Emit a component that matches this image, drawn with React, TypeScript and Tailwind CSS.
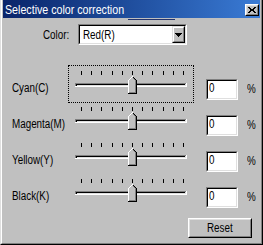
import React from "react";

const TICKS = [12, 22, 32, 43, 53, 63, 73, 83, 94, 104, 114];

function T({ children }: { children: React.ReactNode }) {
  return <span className="inline-block whitespace-nowrap origin-left scale-x-[0.82]">{children}</span>;
}

function Slider({ focused }: { focused?: boolean }) {
  return (
    <svg
      width={124}
      height={36}
      className={focused ? "block shrink-0 outline-1 outline-dotted outline-black" : "block shrink-0"}
      shapeRendering="crispEdges"
    >
      {TICKS.map((x) => (
        <rect key={x} x={x} y={5} width={1} height={4} fill="#000" />
      ))}
      {/* channel */}
      <rect x={6} y={17} width={111} height={1} fill="#808080" />
      <rect x={6} y={17} width={1} height={3} fill="#808080" />
      <rect x={7} y={18} width={109} height={1} fill="#000" />
      <rect x={7} y={18} width={1} height={2} fill="#000" />
      <rect x={8} y={19} width={109} height={1} fill="#dfdfdf" />
      <rect x={116} y={18} width={1} height={2} fill="#dfdfdf" />
      <rect x={6} y={20} width={112} height={1} fill="#fff" />
      <rect x={117} y={17} width={1} height={4} fill="#fff" />
      {/* thumb */}
      <path d="M59 14 L63 10 L68 14 L68 28 L59 28 Z" fill="#c0c0c0" />
      <rect x={59} y={14} width={1} height={13} fill="#fff" />
      <rect x={60} y={13} width={1} height={1} fill="#fff" />
      <rect x={61} y={12} width={1} height={1} fill="#fff" />
      <rect x={62} y={11} width={1} height={1} fill="#fff" />
      <rect x={63} y={10} width={1} height={1} fill="#fff" />
      <rect x={64} y={11} width={1} height={1} fill="#000" />
      <rect x={65} y={12} width={1} height={1} fill="#000" />
      <rect x={66} y={13} width={1} height={1} fill="#000" />
      <rect x={67} y={14} width={1} height={14} fill="#000" />
      <rect x={59} y={27} width={9} height={1} fill="#000" />
      <rect x={66} y={14} width={1} height={13} fill="#808080" />
      <rect x={60} y={26} width={7} height={1} fill="#808080" />
      <rect x={64} y={12} width={1} height={1} fill="#808080" />
      <rect x={65} y={13} width={1} height={1} fill="#808080" />
    </svg>
  );
}

function Row({ label, focused }: { label: string; focused?: boolean }) {
  return (
    <div className="h-[36px] flex items-start">
      <div className="w-[66px] shrink-0 pl-[9px] pt-[16px] text-[12px] leading-[12px]">
        <T>{label}</T>
      </div>
      <Slider focused={focused} />
      <div className="ml-[13px] mt-[13px] shrink-0 w-[32px] h-[21px] border border-t-[#808080] border-l-[#808080] border-b-white border-r-white">
        <div className="h-full border border-t-black border-l-black border-b-[#dfdfdf] border-r-[#dfdfdf] bg-white pl-[1px] pt-[1px] text-[12px] leading-[12px]">
          <T>0</T>
        </div>
      </div>
      <span className="ml-[9px] pt-[17px] text-[12px] leading-[12px]">
        <T>%</T>
      </span>
    </div>
  );
}

export default function App() {
  return (
    <div className="w-[263px] h-[245px] bg-[#c0c0c0] text-black border-l border-r border-b border-l-[#dfdfdf] border-r-black border-b-black font-['Liberation_Sans',Arial,sans-serif]">
      <div className="h-full border-l border-r border-b border-l-white border-r-[#808080] border-b-[#808080] px-[1px] flex flex-col">
        {/* title bar */}
        <div className="h-[18px] shrink-0 flex items-start justify-between bg-linear-to-r from-[#0a246a] to-[#3a7bd5] pl-[2px] pr-[1px]">
          <span className="text-white text-[13px] leading-[18px] mt-[1px]">
            <T>Selective color correction</T>
          </span>
          <div className="mt-[4px] w-[14px] h-[12px] bg-[#c0c0c0] border border-t-white border-l-white border-b-black border-r-black">
            <div className="h-full border border-t-[#dfdfdf] border-l-[#dfdfdf] border-b-[#808080] border-r-[#808080] flex items-center justify-center">
              <svg width={8} height={6} shapeRendering="crispEdges">
                <path
                  d="M0 0h2v1h-2zM6 0h2v1h-2zM1 1h2v1h-2zM5 1h2v1h-2zM2 2h4v1h-4zM2 3h4v1h-4zM1 4h2v1h-2zM5 4h2v1h-2zM0 5h2v1h-2zM6 5h2v1h-2z"
                  fill="#000"
                />
              </svg>
            </div>
          </div>
        </div>
        {/* stray underline */}
        <div className="h-[3px] shrink-0 pt-[1px] pl-[125px]">
          <div className="w-[47px] h-[1px] bg-[#24346c]" />
        </div>
        {/* color row */}
        <div className="mt-[3px] h-[21px] shrink-0 flex items-center">
          <span className="w-[75px] shrink-0 pl-[40px] text-[12px] leading-[12px]">
            <T>Color:</T>
          </span>
          <div className="w-[109px] h-[21px] shrink-0 border border-t-[#808080] border-l-[#808080] border-b-white border-r-white">
            <div className="h-full border border-t-black border-l-black border-b-[#dfdfdf] border-r-[#dfdfdf] bg-white flex items-center">
              <span className="flex-1 pl-[3px] text-[12px] leading-[12px]">
                <T>Red(R)</T>
              </span>
              <div className="w-[13px] h-full bg-[#c0c0c0] border border-t-[#dfdfdf] border-l-[#dfdfdf] border-b-black border-r-black">
                <div className="h-full border border-t-white border-l-white border-b-[#808080] border-r-[#808080] flex items-center justify-center">
                  <svg width={7} height={4} shapeRendering="crispEdges">
                    <path d="M0 0h7v1h-7zM1 1h5v1h-5zM2 2h3v1h-3zM3 3h1v1h-1z" fill="#000" />
                  </svg>
                </div>
              </div>
            </div>
          </div>
        </div>
        {/* sliders */}
        <div className="mt-[21px] flex flex-col">
          <Row label="Cyan(C)" focused />
          <Row label="Magenta(M)" />
          <Row label="Yellow(Y)" />
          <Row label="Black(K)" />
        </div>
        {/* reset */}
        <div className="mt-[8px] self-end mr-[8px] w-[64px] h-[20px] border border-t-white border-l-white border-b-black border-r-black">
          <div className="h-full border border-t-[#dfdfdf] border-l-[#dfdfdf] border-b-[#808080] border-r-[#808080] flex items-center justify-center pl-[5px] text-[12px] leading-[12px]">
            <T>Reset</T>
          </div>
        </div>
      </div>
    </div>
  );
}
